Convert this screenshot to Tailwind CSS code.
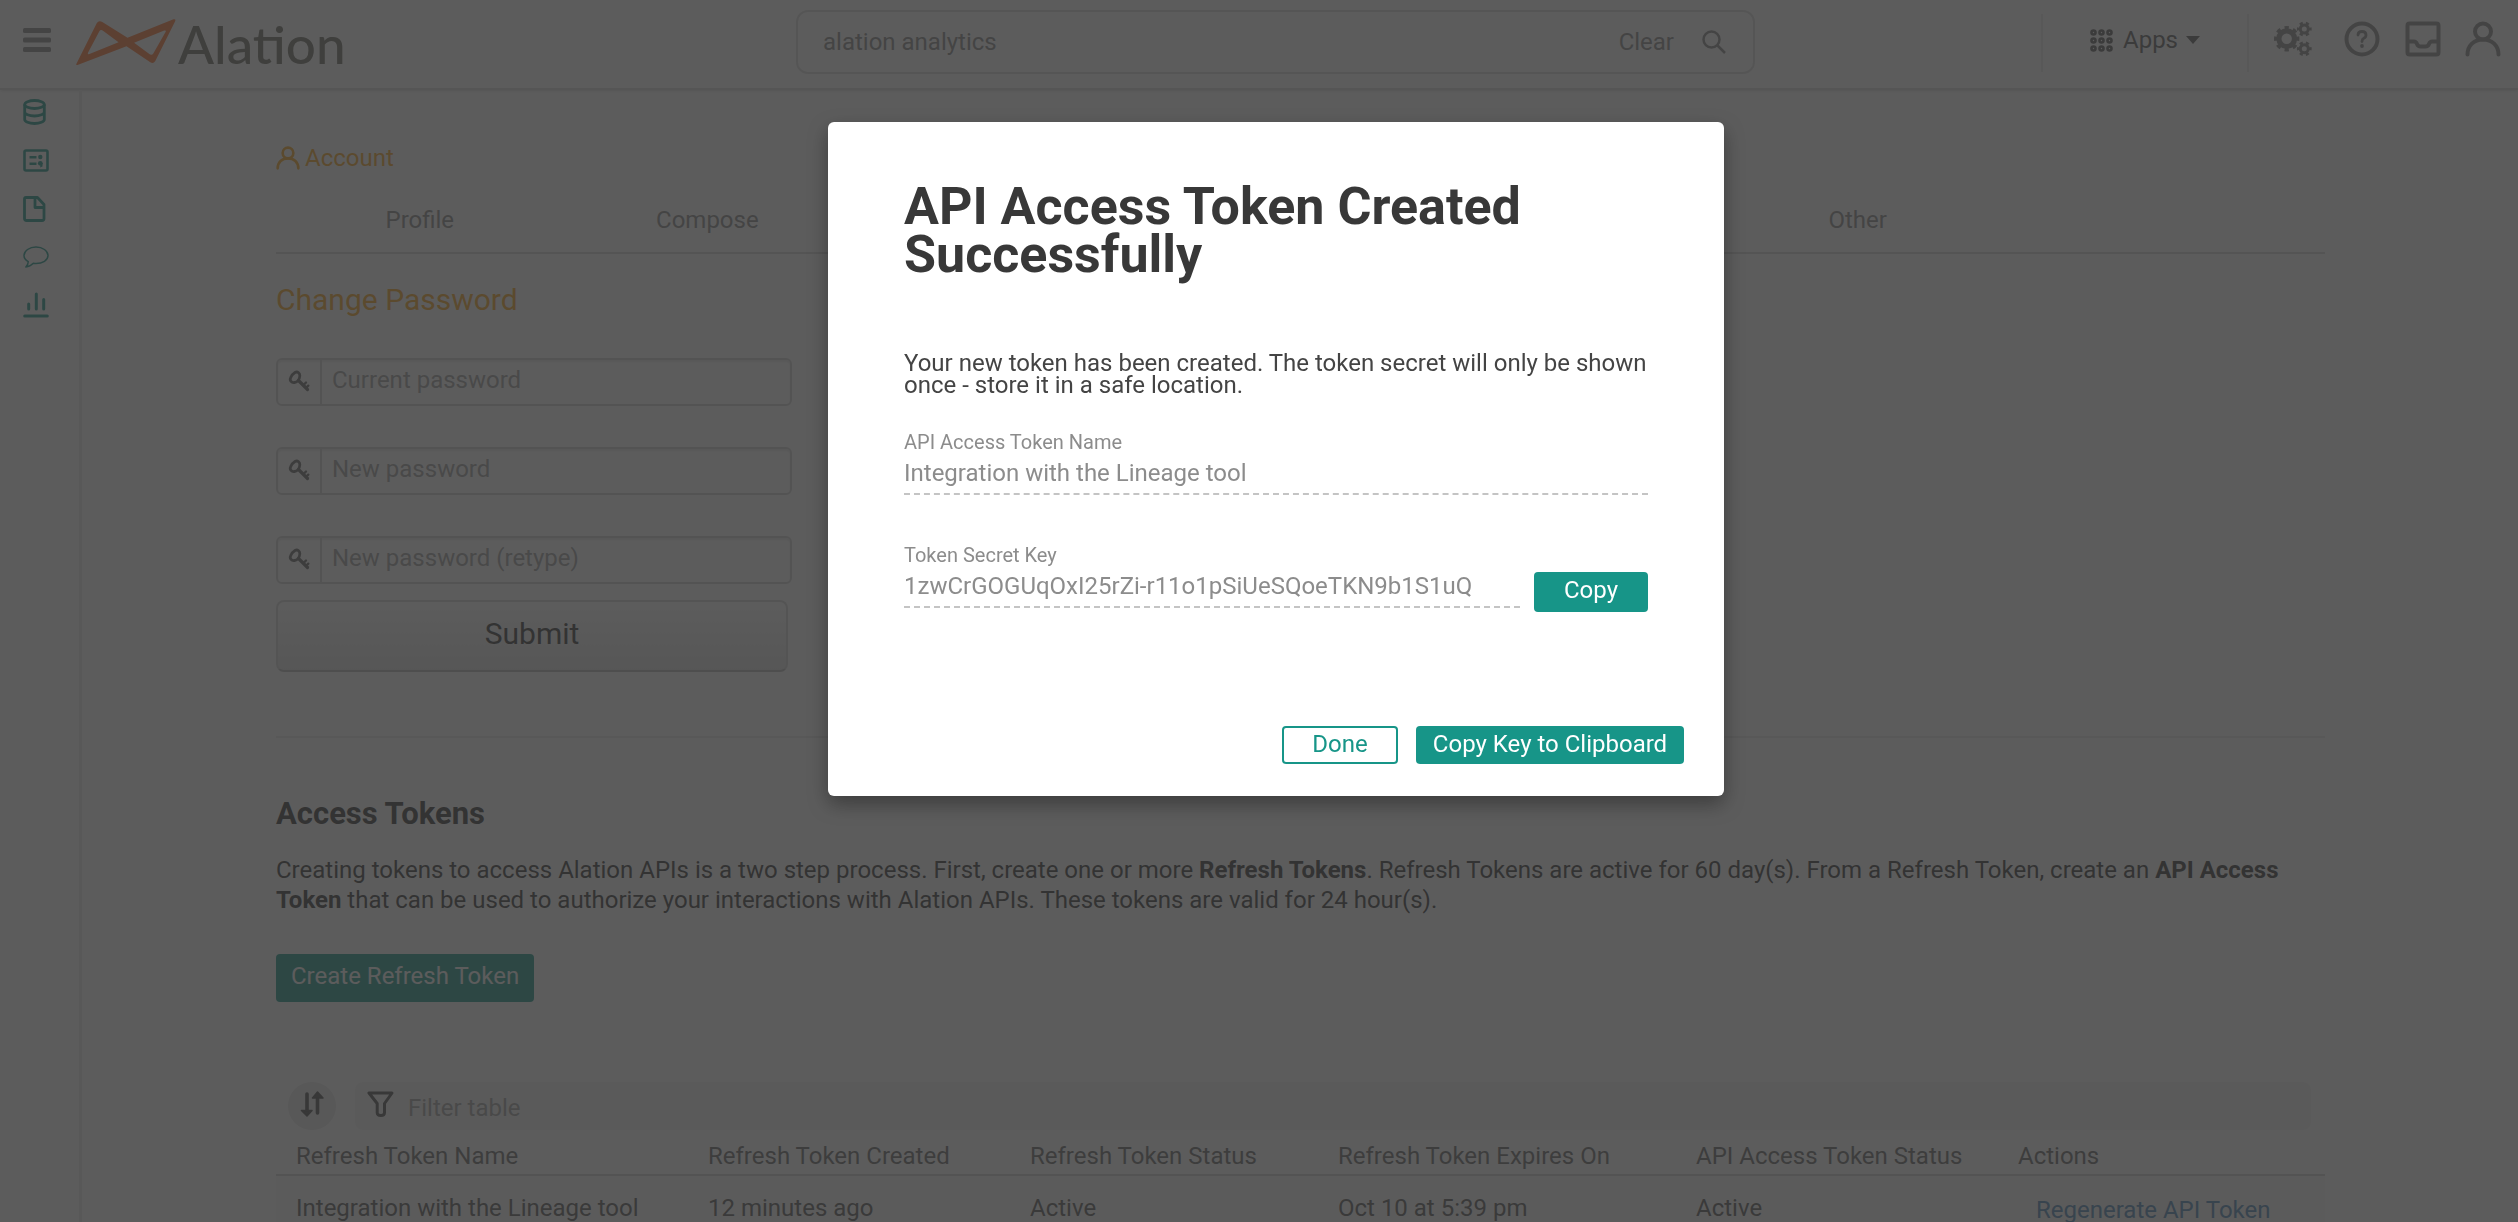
<!DOCTYPE html>
<html lang="en">
<head>
<meta charset="utf-8">
<meta name="viewport" content="width=device-width, initial-scale=1">
<title>Alation - Account</title>
<script src="https://cdn.jsdelivr.net/npm/@tailwindcss/browser@4"></script>
</head>
<body class="h-screen overflow-hidden bg-white font-['Roboto',sans-serif] text-2xl/7 text-[#333]">

<svg class="hidden">
  <symbol id="user" viewBox="0 0 36 36" fill="none" stroke="currentColor" stroke-width="4" stroke-linecap="round">
    <circle cx="18" cy="10.500" r="8"/>
    <path d="M2.500 33.500C2.500 24.500 9 18.500 18 18.500S33.500 24.500 33.500 33.500"/>
  </symbol>
  <symbol id="key" viewBox="0 0 22 22" fill="none" stroke="currentColor" stroke-linecap="round">
    <path d="M7 2.500C9.500 1 12 3 11.800 6 11.600 9 9.500 12 6.500 12.500 3.500 13 1.500 10.500 2.500 8 3.200 6 5 3.700 7 2.500Z" stroke-width="2.800"/>
    <path d="M10.500 10.500 19.500 19.500" stroke-width="3.200"/>
    <path d="M16 14.500 18 12.500M18.500 17.500 20.300 15.700" stroke-width="2.400"/>
  </symbol>
</svg>

<!-- Top bar -->
<header class="grid h-[90px] grid-cols-[796fr_959fr_763fr] border-b-2 border-[#ddd] shadow-sm">
  <div class="flex items-center pb-1 pl-[23px]">
    <button aria-label="Menu" class="mb-1 text-[#888]">
      <svg class="h-6 w-7" viewBox="0 0 28 24" fill="currentColor"><rect width="28" height="5" rx="1.500"/><rect y="9.500" width="28" height="5" rx="1.500"/><rect y="19" width="28" height="5" rx="1.500"/></svg>
    </button>
    <a href="#" class="ml-[25px] flex items-center" aria-label="Alation home">
      <svg class="h-[46px] w-[100px]" viewBox="48 59 301 139" fill="#ff7330" fill-rule="evenodd">
        <path d="M48 196 110 72Q116 62 127 68L203 116 342 60Q350 58 347 66L287 186Q281 196 272 190L200 141 54 197Q47 199 48 196ZM84 160Q81 167 88 165L176 129 130 95Q122 89 118 96ZM223 131 267 163Q276 171 281 163L318 98Q321 92 314 94Z"/>
      </svg>
      <span class="ml-0.5 pt-1 font-['Lato','Roboto',sans-serif] text-[53px]/[46px] font-medium text-[#6f6f65]">Alation</span>
    </a>
  </div>
  <form class="mt-2.5 flex h-16 items-center rounded-xl border-2 border-[#ddd] px-[25px]">
    <input aria-label="Search" value="alation analytics" class="min-w-0 flex-1 text-[#888] outline-none">
    <button type="button" class="text-[#888]">Clear</button>
    <button type="button" aria-label="Search" class="ml-7 mr-0.5 text-[#888]">
      <svg class="size-6" viewBox="0 0 24 24" fill="none" stroke="currentColor" stroke-width="2.500"><circle cx="9.500" cy="9.500" r="8"/><path d="M15 15 23 23"/></svg>
    </button>
  </form>
  <div class="flex items-start justify-end pt-3.5 pr-[17px] text-[#888]">
    <div class="flex h-[58px] w-[208px] items-center border-x-2 border-[#ebebeb] pb-1.5 pl-[47px]">
      <button class="flex items-center text-[#595959]">
        <svg class="size-[23px]" viewBox="0 0 23 23" fill="none" stroke="currentColor" stroke-width="2.600"><circle cx="3.500" cy="3.500" r="2"/><circle cx="11.500" cy="3.500" r="2"/><circle cx="19.500" cy="3.500" r="2"/><circle cx="3.500" cy="11.500" r="2"/><circle cx="11.500" cy="11.500" r="2"/><circle cx="19.500" cy="11.500" r="2"/><circle cx="3.500" cy="19.500" r="2"/><circle cx="11.500" cy="19.500" r="2"/><circle cx="19.500" cy="19.500" r="2"/></svg>
        <span class="ml-2.5">Apps</span>
        <svg class="ml-2 h-2 w-3.5" viewBox="0 0 14 8" fill="currentColor"><path d="M0 0H14L7 8Z"/></svg>
      </button>
    </div>
    <button aria-label="Settings" class="mt-[7px] ml-[25px]">
      <svg class="h-9 w-[38px]" viewBox="0 0 38 36" fill="none" stroke="currentColor">
        <circle cx="12.700" cy="17.700" r="7.800" stroke-width="5.200"/>
        <circle cx="12.700" cy="17.700" r="11" stroke-width="3.400" pathLength="16" stroke-dasharray="1 1" stroke-dashoffset=".5"/>
        <circle cx="30.300" cy="8" r="4" stroke-width="3"/>
        <circle cx="30.300" cy="8" r="6" stroke-width="2.800" pathLength="12" stroke-dasharray="1 1" stroke-dashoffset=".5"/>
        <circle cx="30.300" cy="27.700" r="4" stroke-width="3"/>
        <circle cx="30.300" cy="27.700" r="6" stroke-width="2.800" pathLength="12" stroke-dasharray="1 1" stroke-dashoffset=".5"/>
      </svg>
    </button>
    <button aria-label="Help" class="mt-[7px] ml-8">
      <svg class="size-9" viewBox="0 0 36 36" fill="none" stroke="currentColor" stroke-linecap="round"><circle cx="18" cy="18" r="15.500" stroke-width="4"/><path d="M14 14Q14 10.500 18 10.500T22 14Q22 16.200 19.800 17.300 18 18.200 18 20.500" stroke-width="2.800"/><circle cx="18" cy="25" r="1.900" fill="currentColor" stroke="none"/></svg>
    </button>
    <button aria-label="Inbox" class="mt-[7px] ml-[25px]">
      <svg class="size-9" viewBox="0 0 36 36" fill="none" stroke="currentColor" stroke-width="4"><rect x="2.500" y="2.500" width="31" height="31" rx="2"/><path d="M3 20.500H9Q11 20.500 12 23 13 25.500 15.500 25.500H20.500Q23 25.500 24 23 25 20.500 27 20.500H33"/></svg>
    </button>
    <button aria-label="Account menu" class="mt-[7px] ml-6"><svg class="size-9"><use href="#user"/></svg></button>
  </div>
</header>

<div class="flex h-[calc(100vh-90px)]">
  <!-- Side rail -->
  <nav class="flex w-[82px] shrink-0 flex-col gap-6 border-r-3 border-[#e9e9e9] pt-[9px] pl-[23px] text-[#179588]">
    <a href="#" aria-label="Sources"><svg class="h-[26px] w-[23px]" viewBox="0 0 23 26" fill="none" stroke="currentColor" stroke-width="2.800"><ellipse cx="11.500" cy="5.500" rx="9.800" ry="4"/><path d="M1.700 5.500V20.500C1.700 22.700 6 24.500 11.500 24.500S21.300 22.700 21.300 20.500V5.500M1.700 13C1.700 15.200 6 17 11.500 17S21.300 15.200 21.300 13"/></svg></a>
    <a href="#" aria-label="Queries"><svg class="h-[23px] w-[26px]" viewBox="0 0 26 23" fill="none" stroke="currentColor" stroke-width="2.600"><rect x="1.500" y="1.500" width="23" height="20" rx="1.500"/><path d="M6.500 8.200H13.500M6.500 14.800H13.500"/><g fill="currentColor" stroke="none"><circle cx="17.300" cy="8" r="2.200"/><circle cx="17.300" cy="14.300" r="2.400"/><path d="M18 14H19.500V17.500L17 18.500Z"/></g></svg></a>
    <a href="#" aria-label="Articles"><svg class="h-[26px] w-[23px]" viewBox="0 0 23 26" fill="none" stroke="currentColor" stroke-width="2.800" stroke-linejoin="round"><path d="M3 1.500H14.500L21 8.500V22.500Q21 24.500 19 24.500H3.500Q1.500 24.500 1.500 22.500V3Q1.500 1.500 3 1.500ZM12 2V11.500H20.500"/></svg></a>
    <a href="#" aria-label="Conversations"><svg class="h-[22px] w-[26px]" viewBox="0 0 26 22" fill="none" stroke="currentColor" stroke-width="1.500" stroke-linejoin="round"><path d="M13 1C19.600 1 25 4.800 25 9.500S19.600 17.500 13 17.500C12 17.500 11.200 17.400 10.300 17.300 8 19.800 5.500 20.800 2.800 21 4.300 19.500 5.300 18 5.300 15.600 2.700 14.200 1 12 1 9.500 1 4.800 6.400 1 13 1Z"/></svg></a>
    <a href="#" aria-label="Analytics"><svg class="size-[26px]" viewBox="0 0 26 26" fill="none" stroke="currentColor" stroke-width="3" stroke-linecap="round"><path d="M1.700 24H24.300M5.700 12V17M13.300 2V17M20.700 7.500V17"/></svg></a>
  </nav>

  <main class="min-w-0 flex-1 pt-[54px] pr-[193px] pl-[194px]">
    <div class="flex items-center gap-[5px] text-[#f8a51b]">
      <svg class="size-6"><use href="#user"/></svg>
      <span>Account</span>
    </div>
    <nav class="mt-[34px] border-b-2 border-[#d8d8d8] pb-[18px] text-[#888]">
      <div class="mr-9 grid grid-cols-7 text-center">
        <a href="#">Profile</a>
        <a href="#">Compose</a>
        <a href="#" class="col-start-6">Other</a>
      </div>
    </nav>

    <h2 class="mt-7 text-3xl/9 text-[#f8a51b]">Change Password</h2>
    <form class="mt-10 w-[516px]">
      <div class="flex flex-col gap-[41px]">
        <label class="flex h-12 rounded-md border-2 border-[#d3d3d3] shadow-[inset_0_2px_2px_#e8e8e8]">
          <span class="flex w-11 justify-center border-r-2 border-[#d3d3d3] pt-2.5 text-[#666]"><svg class="size-[22px]"><use href="#key"/></svg></span>
          <input type="password" aria-label="Current password" placeholder="Current password" class="min-w-0 flex-1 pb-1 pl-2.5 outline-none placeholder:text-[#a0a0a0]">
        </label>
        <label class="flex h-12 rounded-md border-2 border-[#d3d3d3] shadow-[inset_0_2px_2px_#e8e8e8]">
          <span class="flex w-11 justify-center border-r-2 border-[#d3d3d3] pt-2.5 text-[#666]"><svg class="size-[22px]"><use href="#key"/></svg></span>
          <input type="password" aria-label="New password" placeholder="New password" class="min-w-0 flex-1 pb-1 pl-2.5 outline-none placeholder:text-[#a0a0a0]">
        </label>
        <label class="flex h-12 rounded-md border-2 border-[#d3d3d3] shadow-[inset_0_2px_2px_#e8e8e8]">
          <span class="flex w-11 justify-center border-r-2 border-[#d3d3d3] pt-2.5 text-[#666]"><svg class="size-[22px]"><use href="#key"/></svg></span>
          <input type="password" aria-label="New password (retype)" placeholder="New password (retype)" class="min-w-0 flex-1 pb-1 pl-2.5 outline-none placeholder:text-[#a0a0a0]">
        </label>
      </div>
      <button type="button" class="mt-4 block h-[72px] w-[512px] rounded-lg border-2 border-[#d8d8d8] border-b-[#b8b8b8] bg-linear-to-b from-white to-[#e2e2e2] pb-1 text-3xl/9">Submit</button>
    </form>

    <hr class="mt-16 border-t-2 border-[#eaeaea]">

    <h2 class="mt-[58px] text-[31px]/9 font-bold">Access Tokens</h2>
    <p class="mt-[23px] leading-[30px]">Creating tokens to access Alation APIs is a two step process. First, create one or more <b>Refresh Tokens</b>. Refresh Tokens are active for 60 day(s). From a Refresh Token, create an <b>API Access Token</b> that can be used to authorize your interactions with Alation APIs. These tokens are valid for 24 hour(s).</p>
    <button class="mt-[39px] block h-12 rounded bg-[#179588] px-[15px] pb-1 text-white">Create Refresh Token</button>

    <div class="mt-20 flex gap-[19px] pr-3.5 pl-3">
      <button aria-label="Sort" class="flex size-12 items-center justify-center rounded-full bg-[#e8e8e8] pb-1 text-[#4a4a4a]">
        <svg class="size-[26px]" viewBox="0 0 26 26" fill="currentColor" stroke="currentColor" stroke-linecap="round" stroke-linejoin="round"><path d="M8 3V20M18.500 22V8" stroke-width="3.600"/><path d="M2.500 19.500H13L8 25ZM13.500 7H24L18.500 1Z" stroke-width="1.500"/></svg>
      </button>
      <label class="flex h-12 flex-1 items-center gap-3.5 rounded-lg bg-[#f6f6f6] pl-3 text-[#4a4a4a]">
        <svg class="mb-1 h-[26px] w-[27px]" viewBox="0 0 27 26" fill="none" stroke="currentColor" stroke-width="3" stroke-linejoin="round"><path d="M2 2H25L17.500 12.500V21.500Q17.500 24.500 13.800 24.500T10.200 21.500V12.500Z"/></svg>
        <input aria-label="Filter table" placeholder="Filter table" class="min-w-0 flex-1 pt-1 outline-none placeholder:text-[#a0a0a0]">
      </label>
    </div>

    <table class="w-full table-fixed text-left text-[#666]">
      <colgroup><col class="w-[412px]"><col class="w-[322px]"><col class="w-[308px]"><col class="w-[358px]"><col class="w-[322px]"><col></colgroup>
      <thead>
        <tr class="border-b-2 border-[#d3d3d3]">
          <th class="pt-3 pb-1 pl-5 font-normal">Refresh Token Name</th>
          <th class="pt-3 pb-1 pl-5 font-normal">Refresh Token Created</th>
          <th class="pt-3 pb-1 pl-5 font-normal">Refresh Token Status</th>
          <th class="pt-3 pb-1 pl-5 font-normal">Refresh Token Expires On</th>
          <th class="pt-3 pb-1 pl-5 font-normal">API Access Token Status</th>
          <th class="pt-3 pb-1 pl-5 font-normal">Actions</th>
        </tr>
      </thead>
      <tbody>
        <tr class="bg-[#f9f9f9] text-[#555]">
          <td class="py-4 pl-5">Integration with the Lineage tool</td>
          <td class="py-4 pl-5">12 minutes ago</td>
          <td class="py-4 pl-5">Active</td>
          <td class="py-4 pl-5">Oct 10 at 5:39 pm</td>
          <td class="py-4 pl-5">Active</td>
          <td class="pt-5 pb-4 pl-[38px]"><a href="#" class="text-[#4a86b8]">Regenerate API Token</a></td>
        </tr>
      </tbody>
    </table>
  </main>
</div>

<!-- Modal -->
<div class="fixed inset-0 flex items-start justify-center bg-[#333]/80 pt-[122px] pl-[34px]">
  <section role="dialog" aria-modal="true" aria-labelledby="dialog-title" class="w-[896px] rounded-md bg-white pt-[61px] pb-8 shadow-[0_8px_20px_rgba(0,0,0,0.35)]">
    <div class="px-[76px]">
      <h1 id="dialog-title" class="text-[52px]/[48px] font-bold text-[#383838]">API Access Token Created Successfully</h1>
      <p class="mt-[73px] leading-[22px] text-[#444]">Your new token has been created. The token secret will only be shown once - store it in a safe location.</p>
      <label for="token-name" class="mt-[34px] block text-xl/6 text-[#8c8c8c]">API Access Token Name</label>
      <input id="token-name" readonly value="Integration with the Lineage tool" class="mt-[3px] block h-[38px] w-full border-b-2 border-dashed border-[#c4c4c4] pb-1 text-[#8c8c8c] outline-none">
      <div class="mt-12 flex items-end gap-3.5">
        <div class="flex-1 pb-1">
          <label for="token-key" class="block text-xl/6 text-[#8c8c8c]">Token Secret Key</label>
          <input id="token-key" readonly value="1zwCrGOGUqOxI25rZi-r11o1pSiUeSQoeTKN9b1S1uQ" class="mt-[3px] block h-[38px] w-full border-b-2 border-dashed border-[#c4c4c4] pb-1 text-[#8c8c8c] outline-none">
        </div>
        <button class="h-10 w-[114px] rounded bg-[#179588] pb-1 text-white">Copy</button>
      </div>
    </div>
    <div class="mt-[114px] flex justify-end gap-[18px] pr-10">
      <button class="h-[38px] w-[116px] rounded border-2 border-[#179588] pb-0.5 text-[#179588]">Done</button>
      <button class="h-[38px] w-[268px] rounded bg-[#179588] pb-0.5 text-white">Copy Key to Clipboard</button>
    </div>
  </section>
</div>
</body>
</html>
